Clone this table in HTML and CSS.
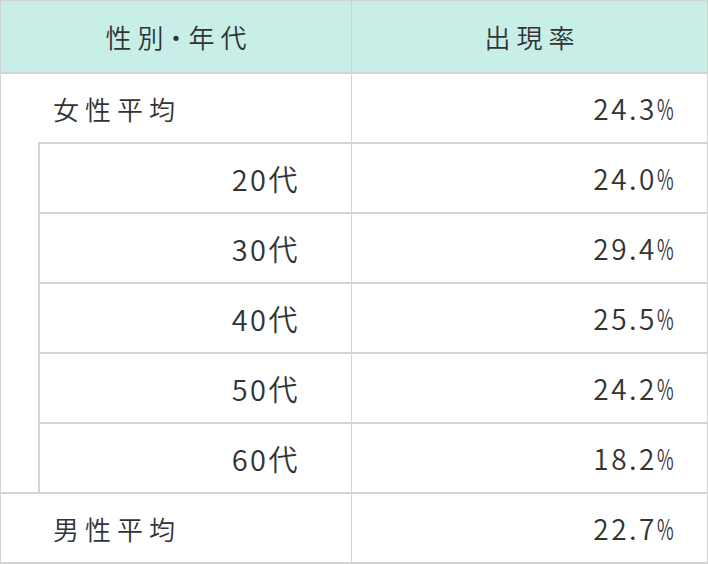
FILE: index.html
```html
<!DOCTYPE html>
<html lang="ja">
<head>
<meta charset="utf-8">
<link rel="stylesheet" href="styles.css">
</head>
<body>
<div class="table">
  <div class="row head">
    <div class="cell left">性別・年代</div>
    <div class="cell right">出現率</div>
  </div>
  <div class="row">
    <div class="cell left label">女性平均</div>
    <div class="cell right num">24.3<span class="pct">%</span></div>
  </div>
  <div class="group">
    <div class="row sub">
      <div class="cell subleft">20代</div>
      <div class="cell right num">24.0<span class="pct">%</span></div>
    </div>
    <div class="row sub">
      <div class="cell subleft">30代</div>
      <div class="cell right num">29.4<span class="pct">%</span></div>
    </div>
    <div class="row sub">
      <div class="cell subleft">40代</div>
      <div class="cell right num">25.5<span class="pct">%</span></div>
    </div>
    <div class="row sub">
      <div class="cell subleft">50代</div>
      <div class="cell right num">24.2<span class="pct">%</span></div>
    </div>
    <div class="row sub">
      <div class="cell subleft">60代</div>
      <div class="cell right num">18.2<span class="pct">%</span></div>
    </div>
  </div>
  <div class="row male">
    <div class="cell left label">男性平均</div>
    <div class="cell right num">22.7<span class="pct">%</span></div>
  </div>
</div>
</body>
</html>
```

FILE: styles.css
```css
html, body {
  margin: 0;
  padding: 0;
  background: #ffffff;
}

.table {
  box-sizing: border-box;
  width: 708px;
  height: 564px;
  border: 1px solid #d3d3d3;
  border-bottom: none;
  font-family: "Noto Sans CJK JP", "Noto Sans", sans-serif;
  font-weight: 350;
  color: #333333;
  font-size: 26px;
}

.row {
  display: flex;
  height: 68px;
}

.cell {
  box-sizing: border-box;
  display: flex;
  align-items: center;
  white-space: nowrap;
}

.left {
  width: 351px;
  flex: none;
  border-right: 1px solid #d3d3d3;
}

.right {
  flex: 1;
}

.head {
  height: 71px;
  background: #c8efe7;
  border-bottom: 2px solid #d3d3d3;
}

.head .cell {
  justify-content: center;
  font-size: 26px;
  letter-spacing: 6px;
  padding-left: 6px;
  font-feature-settings: "palt";
}

.label {
  padding-left: 52px;
  letter-spacing: 6px;
}

.num {
  justify-content: flex-end;
  padding-right: 34px;
  font-size: 28px;
  letter-spacing: 2.5px;
}

.pct {
  display: inline-block;
  width: 16px;
  letter-spacing: 0;
  transform: scaleX(0.65);
  transform-origin: left center;
}

.group {
  margin-left: 37px;
  border-left: 2px solid #d3d3d3;
}

.sub {
  height: 70px;
  border-top: 2px solid #d3d3d3;
  box-sizing: border-box;
}

.subleft {
  width: 312px;
  flex: none;
  border-right: 1px solid #d3d3d3;
  justify-content: flex-end;
  padding-right: 51px;
  font-size: 29px;
  letter-spacing: 2.5px;
}

.male {
  height: 72px;
  box-sizing: border-box;
  border-top: 2px solid #d3d3d3;
  border-bottom: 2px solid #d3d3d3;
}
```
